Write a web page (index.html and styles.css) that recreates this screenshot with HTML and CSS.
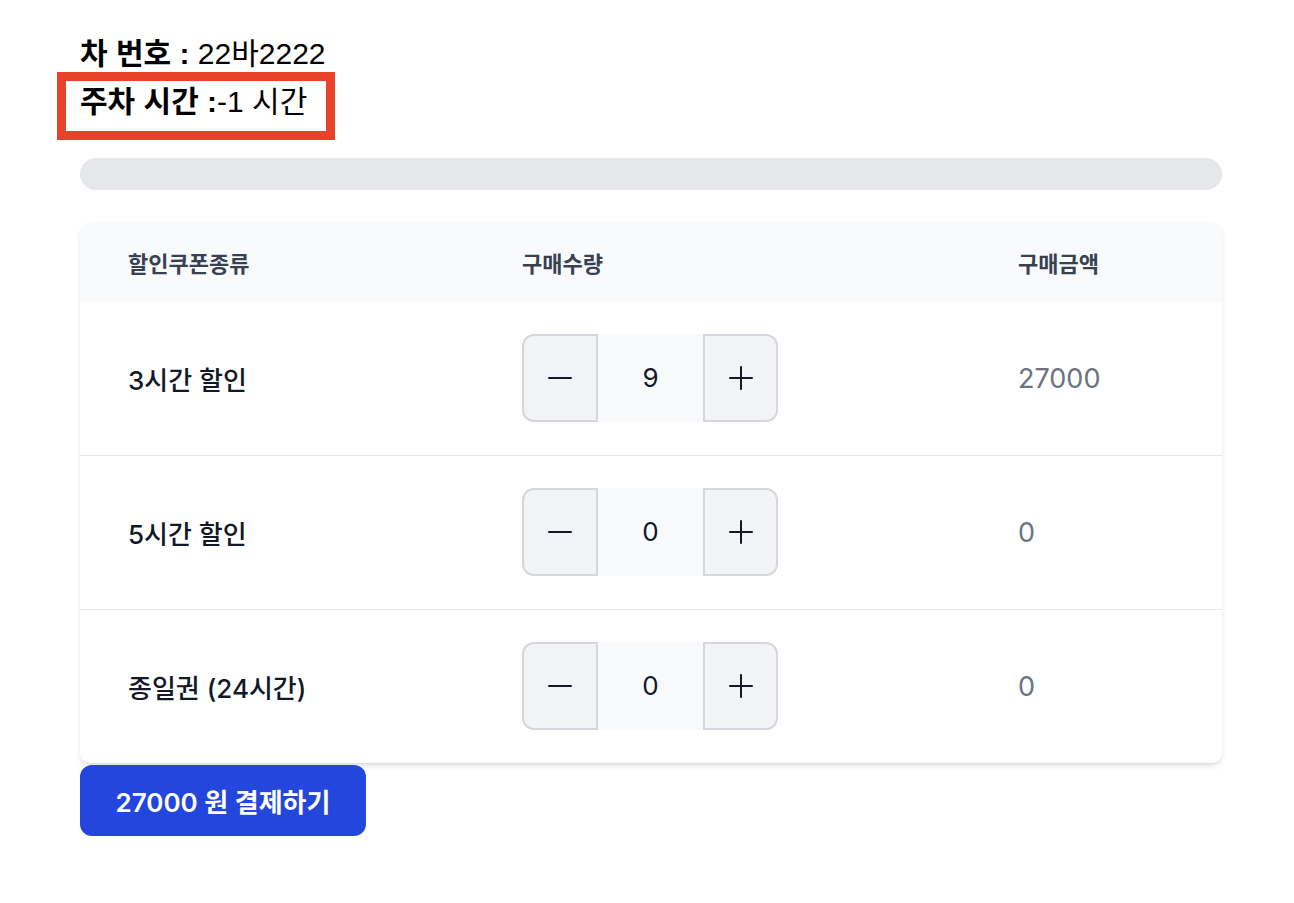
FILE: index.html
```html
<!DOCTYPE html>
<html lang="ko">
<head>
<meta charset="utf-8">
<title>주차 할인</title>
<link rel="stylesheet" href="styles.css">
</head>
<body>
<main class="page">
  <div class="info-line"><b>차 번호 :</b> 22바2222</div>
  <div class="info-line"><span class="highlight"><b>주차 시간 :</b>-1 시간</span></div>
  <div class="progress"></div>
  <div class="card">
    <table class="coupon-table">
      <colgroup>
        <col class="col-type">
        <col class="col-qty">
        <col class="col-amount">
      </colgroup>
      <thead>
        <tr><th>할인쿠폰종류</th><th>구매수량</th><th>구매금액</th></tr>
      </thead>
      <tbody>
        <tr>
          <td class="name">3시간 할인</td>
          <td>
            <div class="stepper">
              <button class="step minus" aria-label="감소"><span class="bar-h"></span></button>
              <div class="qty">9</div>
              <button class="step plus" aria-label="증가"><span class="bar-h"></span><span class="bar-v"></span></button>
            </div>
          </td>
          <td class="amount">27000</td>
        </tr>
        <tr>
          <td class="name">5시간 할인</td>
          <td>
            <div class="stepper">
              <button class="step minus" aria-label="감소"><span class="bar-h"></span></button>
              <div class="qty">0</div>
              <button class="step plus" aria-label="증가"><span class="bar-h"></span><span class="bar-v"></span></button>
            </div>
          </td>
          <td class="amount">0</td>
        </tr>
        <tr>
          <td class="name">종일권 (24시간)</td>
          <td>
            <div class="stepper">
              <button class="step minus" aria-label="감소"><span class="bar-h"></span></button>
              <div class="qty">0</div>
              <button class="step plus" aria-label="증가"><span class="bar-h"></span><span class="bar-v"></span></button>
            </div>
          </td>
          <td class="amount">0</td>
        </tr>
      </tbody>
    </table>
  </div>
  <button class="pay">27000 원 결제하기</button>
</main>
</body>
</html>
```

FILE: styles.css
```css
*, *::before, *::after { box-sizing: border-box; }

body {
  margin: 0;
  background: #ffffff;
  font-family: "Liberation Sans", "Noto Sans CJK KR", sans-serif;
}

.page {
  padding: 30px 72px 40px 80px;
}

.info-line {
  height: 48px;
  line-height: 48px;
  font-size: 30px;
  color: #000;
}

.info-line b { font-weight: 700; }

.highlight {
  position: relative;
  display: inline-block;
}

.highlight::before {
  content: "";
  position: absolute;
  left: -23px;
  top: -6px;
  width: 278px;
  height: 68px;
  border: 9px solid #e8422b;
  pointer-events: none;
}

.progress {
  margin-top: 32px;
  height: 32px;
  border-radius: 16px;
  background: #e5e7eb;
}

.card {
  margin-top: 32px;
  background: #fff;
  border-radius: 10px;
  overflow: hidden;
  box-shadow: 0 4px 6px -1px rgba(0,0,0,0.1), 0 2px 4px -2px rgba(0,0,0,0.1);
}

.coupon-table {
  width: 100%;
  border-collapse: collapse;
  font-family: Inter, "Noto Sans CJK KR", sans-serif;
}

.col-type { width: 394px; }
.col-qty { width: 496px; }

.coupon-table thead tr {
  background: #f9fafb;
}

.coupon-table th {
  height: 80px;
  padding: 0 48px;
  text-align: left;
  font-size: 22px;
  font-weight: 600;
  color: #374151;
}

.coupon-table td {
  padding: 32px 48px 33px;
  vertical-align: middle;
}

.coupon-table tbody tr + tr td {
  border-top: 1px solid #e5e7eb;
}

.name {
  font-size: 26px;
  font-weight: 500;
  color: #111827;
}

.amount {
  font-size: 27px;
  color: #6b7280;
}

.stepper {
  display: flex;
  width: 256px;
  height: 88px;
}

.step {
  position: relative;
  width: 76px;
  height: 88px;
  padding: 0;
  background: #f3f4f6;
  border: 2px solid #d5d7dc;
  cursor: pointer;
}

.minus { border-radius: 12px 0 0 12px; }
.plus { border-radius: 0 12px 12px 0; width: 75px; }

.bar-h, .bar-v {
  position: absolute;
  left: 50%;
  top: 50%;
  background: #111827;
  border-radius: 1px;
}

.bar-h { width: 24px; height: 2px; transform: translate(-50%, -50%); }
.bar-v { width: 2px; height: 24px; transform: translate(-50%, -50%); }

.qty {
  width: 105px;
  height: 88px;
  line-height: 88px;
  text-align: center;
  background: #f9fafb;
  font-size: 26px;
  color: #111827;
}

.pay {
  display: block;
  margin-top: 2px;
  width: 286px;
  height: 71px;
  border: none;
  border-radius: 12px;
  background: #2346dc;
  color: #fff;
  font-family: Inter, "Noto Sans CJK KR", sans-serif;
  font-size: 26px;
  font-weight: 600;
  cursor: pointer;
}
```
